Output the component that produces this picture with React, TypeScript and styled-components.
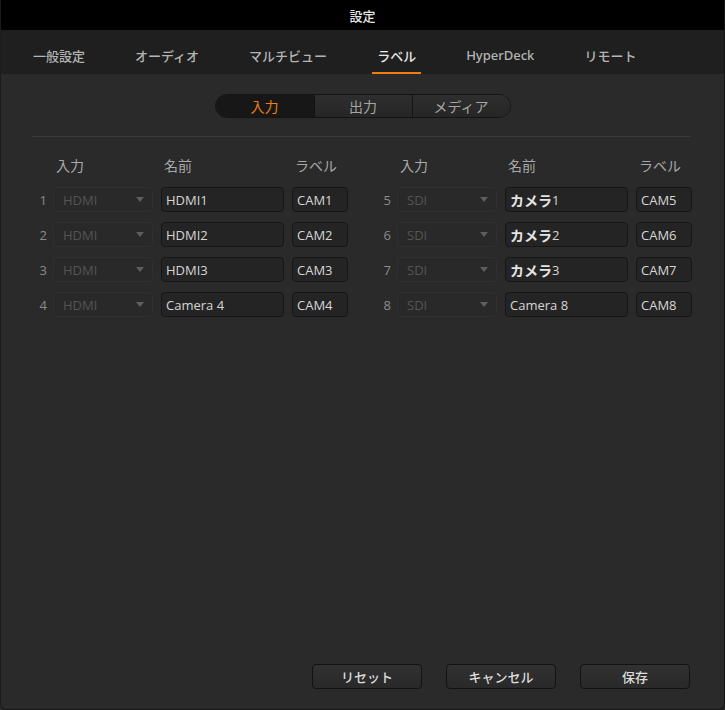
import React from "react";
import styled, { createGlobalStyle } from "styled-components";

const Global = createGlobalStyle`
  html, body { margin: 0; padding: 0; background: #2a2a2a; }
  body { font-family: "Open Sans", "Noto Sans CJK JP", sans-serif; }
  * { box-sizing: border-box; }
`;

const Window = styled.div`
  width: 725px;
  height: 710px;
  display: flex;
  flex-direction: column;
  background: #2a2a2a;
  border-right: 1px solid #141414;
  border-bottom: 1px solid #141414;
  border-left: 1px solid #1c1c1c;
  border-radius: 0 0 6px 6px;
  overflow: hidden;
`;

const TitleBar = styled.div`
  height: 30px;
  flex: none;
  background: #000;
  color: #e6e6e6;
  font-family: "Noto Sans CJK JP", sans-serif;
  font-size: 13px;
  font-weight: 500;
  display: flex;
  align-items: center;
  justify-content: center;
`;

const TabBar = styled.div`
  height: 44px;
  flex: none;
  background: #1f1f1f;
  display: flex;
  gap: 40px;
  padding-left: 27px;
`;

const Tab = styled.div<{ $active?: boolean }>`
  padding: 8px 5px 0;
  display: flex;
  align-items: center;
  font-family: "Noto Sans", "Noto Sans CJK JP", sans-serif;
  font-size: 13px;
  font-weight: 500;
  color: ${(p) => (p.$active ? "#e8e8e8" : "#b4b4b4")};
  border-bottom: 2px solid ${(p) => (p.$active ? "#f07d12" : "transparent")};
`;

const Content = styled.div`
  flex: 1;
  display: flex;
  flex-direction: column;
  padding: 20px 33px 20px 31px;
`;

const Segmented = styled.div`
  align-self: center;
  display: flex;
  height: 24px;
  border: 1px solid #141414;
  border-radius: 12px;
  overflow: hidden;
  margin-left: 2px;
`;

const Segment = styled.div<{ $active?: boolean }>`
  width: 98px;
  display: flex;
  align-items: center;
  justify-content: center;
  font-family: "Noto Sans CJK JP", sans-serif;
  font-size: 14px;
  color: ${(p) => (p.$active ? "#f07d12" : "#a6a6a6")};
  background: ${(p) =>
    p.$active ? "#171717" : "linear-gradient(#2e2e2e, #262626)"};
  & + & {
    border-left: 1px solid #141414;
  }
`;

const Divider = styled.div`
  height: 1px;
  background: #3a3a3a;
  margin-top: 18px;
`;

const Table = styled.div`
  display: flex;
  gap: 32px;
  padding-left: 4px;
  margin-top: 18px;
`;

const Group = styled.div`
  display: grid;
  grid-template-columns: 9px 100px 123px 56px;
  column-gap: 8px;
  row-gap: 10px;
  align-items: center;
  grid-auto-rows: 25px;
  grid-template-rows: 22px;
`;

const Head = styled.div`
  font-family: "Noto Sans CJK JP", sans-serif;
  font-size: 14px;
  color: #a8a8a8;
  padding-left: 3px;
  align-self: start;
  line-height: 20px;
`;

const Num = styled.div`
  text-align: right;
  margin-right: -2px;
  font-size: 13px;
  color: #8a8a8a;
`;

const Dropdown = styled.div`
  height: 25px;
  border: 1px solid #303030;
  border-radius: 4px;
  background: #292929;
  display: flex;
  align-items: center;
  justify-content: space-between;
  padding: 0 8px 0 9px;
  font-size: 13px;
  color: #545454;
`;

const Arrow = styled.span`
  width: 0;
  height: 0;
  border-left: 4px solid transparent;
  border-right: 4px solid transparent;
  border-top: 5px solid #5e5e5e;
`;

const Field = styled.div`
  height: 25px;
  border: 1px solid #161616;
  border-radius: 4px;
  background: #242424;
  display: flex;
  align-items: center;
  padding: 0 4px;
  font-size: 13px;
  color: #d6d6d6;
  white-space: nowrap;
`;

const Jp = styled.span`
  font-family: "Noto Sans CJK JP", sans-serif;
  font-weight: 700;
  font-size: 14px;
  color: #e4e4e4;
`;

const Spacer = styled.div`
  flex: 1;
`;

const Buttons = styled.div`
  display: flex;
  justify-content: flex-end;
  gap: 24px;
  padding-right: 1px;
`;

const Button = styled.button`
  width: 110px;
  height: 25px;
  border: 1px solid #121212;
  border-radius: 4px;
  background: linear-gradient(#313131, #292929);
  color: #dcdcdc;
  font-family: "Noto Sans CJK JP", sans-serif;
  font-size: 13px;
  font-weight: 500;
  padding: 0;
  display: flex;
  align-items: center;
  justify-content: center;
`;

type Row = { n: number; src: string; name: React.ReactNode; label: string };

const left: Row[] = [
  { n: 1, src: "HDMI", name: "HDMI1", label: "CAM1" },
  { n: 2, src: "HDMI", name: "HDMI2", label: "CAM2" },
  { n: 3, src: "HDMI", name: "HDMI3", label: "CAM3" },
  { n: 4, src: "HDMI", name: "Camera 4", label: "CAM4" },
];

const right: Row[] = [
  { n: 5, src: "SDI", name: <><Jp>カメラ</Jp>1</>, label: "CAM5" },
  { n: 6, src: "SDI", name: <><Jp>カメラ</Jp>2</>, label: "CAM6" },
  { n: 7, src: "SDI", name: <><Jp>カメラ</Jp>3</>, label: "CAM7" },
  { n: 8, src: "SDI", name: "Camera 8", label: "CAM8" },
];

const InputGroup = ({ rows }: { rows: Row[] }) => (
  <Group>
    <div />
    <Head>入力</Head>
    <Head>名前</Head>
    <Head>ラベル</Head>
    {rows.map((r) => (
      <React.Fragment key={r.n}>
        <Num>{r.n}</Num>
        <Dropdown>
          {r.src}
          <Arrow />
        </Dropdown>
        <Field>{r.name}</Field>
        <Field>{r.label}</Field>
      </React.Fragment>
    ))}
  </Group>
);

const tabs = ["一般設定", "オーディオ", "マルチビュー", "ラベル", "HyperDeck", "リモート"];

export default function App() {
  return (
    <>
      <Global />
      <Window>
        <TitleBar>設定</TitleBar>
        <TabBar>
          {tabs.map((t) => (
            <Tab key={t} $active={t === "ラベル"}>
              {t}
            </Tab>
          ))}
        </TabBar>
        <Content>
          <Segmented>
            <Segment $active>入力</Segment>
            <Segment>出力</Segment>
            <Segment>メディア</Segment>
          </Segmented>
          <Divider />
          <Table>
            <InputGroup rows={left} />
            <InputGroup rows={right} />
          </Table>
          <Spacer />
          <Buttons>
            <Button>リセット</Button>
            <Button>キャンセル</Button>
            <Button>保存</Button>
          </Buttons>
        </Content>
      </Window>
    </>
  );
}
